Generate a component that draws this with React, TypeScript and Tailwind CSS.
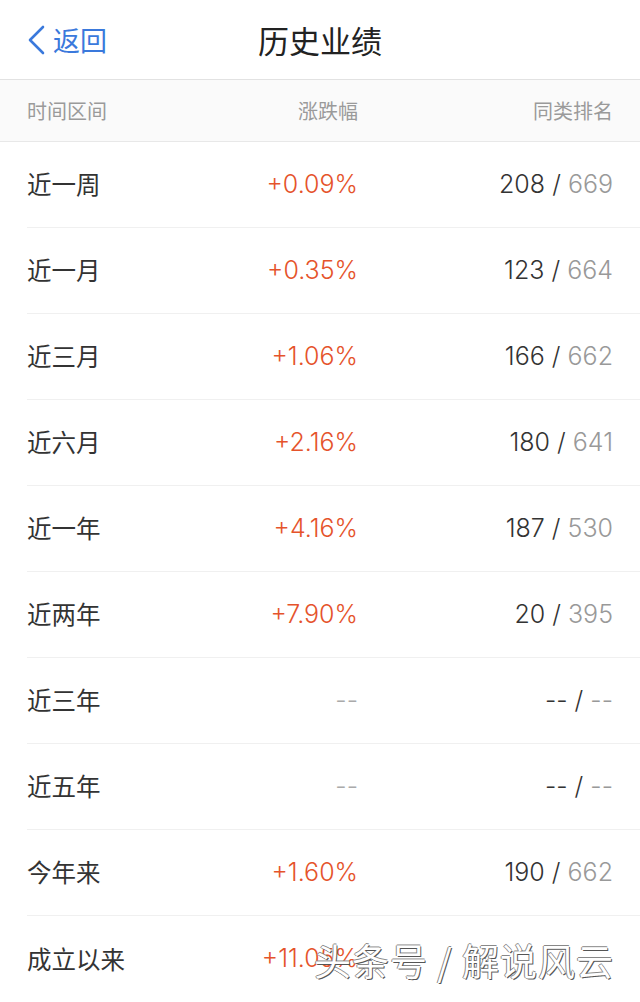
import React from 'react';

const rows = [
  { label: '近一周', pct: '+0.09%', rank: '208', total: '669' },
  { label: '近一月', pct: '+0.35%', rank: '123', total: '664' },
  { label: '近三月', pct: '+1.06%', rank: '166', total: '662' },
  { label: '近六月', pct: '+2.16%', rank: '180', total: '641' },
  { label: '近一年', pct: '+4.16%', rank: '187', total: '530' },
  { label: '近两年', pct: '+7.90%', rank: '20', total: '395' },
  { label: '近三年', pct: '--', rank: '--', total: '--' },
  { label: '近五年', pct: '--', rank: '--', total: '--' },
  { label: '今年来', pct: '+1.60%', rank: '190', total: '662' },
  { label: '成立以来', pct: '+11.05%', rank: '', total: '' },
];

const App: React.FC = () => {
  return (
    <div className="relative w-[640px] h-[1002px] overflow-hidden bg-white font-['Noto_Sans_CJK_SC',sans-serif] text-[#333]">
      {/* Nav bar */}
      <div className="relative h-[80px] flex items-center border-b border-[#e2e2e2]">
        <div className="flex items-center pl-[25px] text-[#3a79dc]">
          <svg width="22" height="32" viewBox="0 0 22 32" fill="none">
            <path d="M18 3 L5 16 L18 29" stroke="#3a79dc" strokeWidth="2.6" strokeLinecap="round" strokeLinejoin="round" />
          </svg>
          <span className="ml-[6px] text-[27px] leading-none">返回</span>
        </div>
        <div className="absolute left-0 right-0 text-center text-[31px] leading-none text-[#222] pointer-events-none">历史业绩</div>
      </div>

      {/* Column header */}
      <div className="h-[62px] flex items-center px-[27px] bg-[#fafafa] border-b border-[#e8e8e8] text-[20px] text-[#9a9a9a]">
        <div className="w-[160px]">时间区间</div>
        <div className="w-[171px] text-right">涨跌幅</div>
        <div className="flex-1 text-right">同类排名</div>
      </div>

      {/* Rows */}
      <div className="pl-[27px]">
        {rows.map((r, i) => (
          <div
            key={i}
            className={`h-[86px] flex items-center pr-[27px] ${i < rows.length - 1 ? 'border-b border-[#f0f0f0]' : ''}`}
          >
            <div className="w-[160px] text-[24.5px] text-[#333]">{r.label}</div>
            <div
              className={`w-[171px] text-right font-['Inter',sans-serif] font-light text-[25px] ${r.pct === '--' ? 'text-[#aaa]' : 'text-[#e5532b]'}`}
            >
              {r.pct}
            </div>
            <div className="flex-1 text-right font-['Inter',sans-serif] font-light text-[25px]">
              {r.rank && (
                <>
                  <span className="text-[#333]">{r.rank}</span>
                  <span className="text-[#333]"> / </span>
                  <span className="text-[#999]">{r.total}</span>
                </>
              )}
            </div>
          </div>
        ))}
      </div>

      {/* Watermark */}
      <div className="absolute left-[314px] top-[942px] text-[37px] leading-none text-white tracking-[1px] [text-shadow:1px_1px_0_#555,-1px_0_0_#888,0_-1px_0_#888]">
        头条号 / 解说风云
      </div>
    </div>
  );
};

export default App;
